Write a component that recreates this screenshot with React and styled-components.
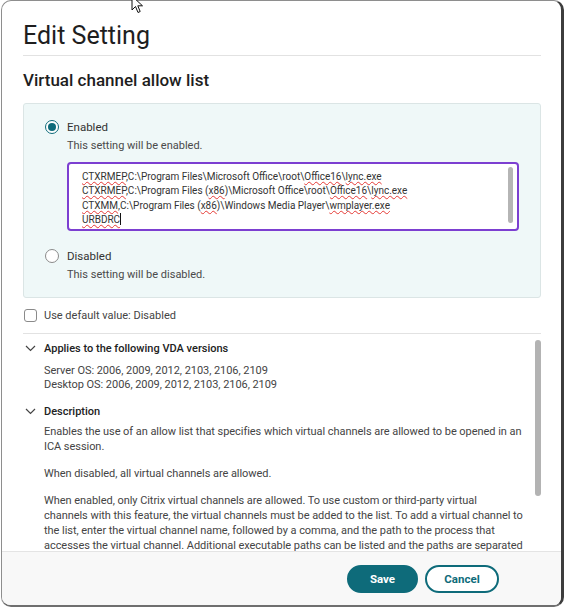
import React from 'react'
import styled, { createGlobalStyle } from 'styled-components'

const GlobalStyle = createGlobalStyle`
  html, body {
    margin: 0;
    padding: 0;
    background: #ffffff;
  }
  body {
    font-family: Roboto, "Liberation Sans", sans-serif;
    color: #333;
  }
`

const Page = styled.div`
  position: relative;
  width: 567px;
  height: 615px;
  box-sizing: border-box;
  padding: 0 3px 8px 1px;
  overflow: hidden;
  display: flex;
`

const Dialog = styled.div`
  flex: 1;
  display: flex;
  flex-direction: column;
  background: #fff;
  border: 1px solid #8e8e8e;
  border-right: 3px solid #3d3d3d;
  border-bottom: 2px solid #6f6f6f;
  border-radius: 10px;
  overflow: hidden;
`

const Header = styled.div`
  padding: 20px 20px 0 21px;
`

const Title = styled.h1`
  margin: 0;
  font-size: 25px;
  line-height: 30px;
  font-weight: 400;
  color: #1e1e1e;
  padding-bottom: 4px;
  border-bottom: 1px solid #e2e2e2;
`

const SettingName = styled.h2`
  margin: 14px 0 13px;
  font-size: 17px;
  line-height: 20px;
  font-weight: 500;
  color: #1e1e1e;
`

const OptionPanel = styled.div`
  background: #eff8f8;
  border: 1px solid #dbe5e5;
  border-radius: 3px;
  padding: 16px 21px 16px 21px;
`

const OptionRow = styled.label`
  display: flex;
  align-items: center;
  gap: 8px;
  height: 14px;
  font-size: 11.5px;
  color: #333;
  margin-top: ${p => (p.$spaced ? '18px' : '0')};
`

const Radio = styled.span`
  width: 14px;
  height: 14px;
  box-sizing: border-box;
  border-radius: 50%;
  background: #fff;
  border: ${p => (p.$checked ? '1.5px solid #0e6b7a' : '1px solid #8a8a8a')};
  display: flex;
  align-items: center;
  justify-content: center;
  &::after {
    content: '';
    width: 8px;
    height: 8px;
    border-radius: 50%;
    background: ${p => (p.$checked ? '#0e6b7a' : 'transparent')};
  }
`

const Hint = styled.div`
  margin: 5px 0 0 22px;
  font-size: 11px;
  line-height: 13px;
  color: #4a4a4a;
`

const ListBox = styled.div`
  position: relative;
  margin: 10px 0 0 22px;
  height: 69px;
  box-sizing: border-box;
  background: #fff;
  border: 2px solid #7c3fd1;
  border-radius: 4px;
  padding: 6px 20px 0 13px;
  font-size: 10px;
  line-height: 14.3px;
  color: #333;
  white-space: pre;
  overflow: hidden;
`

const Typo = styled.span`
  text-decoration: underline wavy #e53935;
  text-decoration-thickness: 1px;
  text-underline-offset: 1px;
  text-decoration-skip-ink: none;
`

const Caret = styled.span`
  display: inline-block;
  width: 1px;
  height: 12px;
  background: #111;
  vertical-align: -2px;
`

const BoxThumb = styled.div`
  position: absolute;
  right: 4px;
  top: 3px;
  width: 5px;
  height: 56px;
  border-radius: 3px;
  background: #b5b5b5;
`

const DefaultRow = styled.label`
  display: flex;
  align-items: center;
  gap: 7px;
  margin-top: 11px;
  padding: 0 0 11px 1px;
  font-size: 11px;
  color: #444;
  border-bottom: 1px solid #e2e2e2;
`

const Checkbox = styled.span`
  width: 13px;
  height: 13px;
  box-sizing: border-box;
  border: 1.5px solid #8a8a8a;
  border-radius: 3px;
  background: #fff;
`

const Details = styled.div`
  position: relative;
  flex: 1;
  margin: 0 20px 0 21px;
  padding: 7px 8px 0 0;
  overflow: hidden;
`

const ScrollThumb = styled.div`
  position: absolute;
  right: 0;
  top: 6px;
  width: 6px;
  height: 156px;
  border-radius: 3px;
  background: #b3b3b3;
`

const SectionHead = styled.div`
  display: flex;
  align-items: center;
  gap: 8px;
  height: 14px;
  padding-left: 2px;
  font-size: 11px;
  font-weight: 500;
  color: #222;
  margin-top: ${p => (p.$spaced ? '13px' : '0')};
`

const SectionBody = styled.div`
  margin: ${p => (p.$tight ? '9px' : '6px')} 0 0 21px;
  font-size: 11px;
  line-height: ${p => (p.$tight ? '13.5px' : '15px')};
  letter-spacing: -0.05px;
  color: #444;
  white-space: nowrap;
  p {
    margin: 0 0 12px;
  }
`

const Footer = styled.div`
  display: flex;
  justify-content: flex-end;
  align-items: center;
  gap: 7px;
  height: 53px;
  padding-right: 62px;
  background: #f8f8f8;
  border-top: 1px solid #e4e4e4;
`

const Button = styled.button`
  height: 28px;
  width: ${p => (p.$primary ? '71px' : '74px')};
  border-radius: 14px;
  box-sizing: border-box;
  font-family: Roboto, "Liberation Sans", sans-serif;
  font-size: 11.5px;
  font-weight: 700;
  cursor: pointer;
  background: ${p => (p.$primary ? '#0e6b7a' : '#fff')};
  color: ${p => (p.$primary ? '#fff' : '#0e6b7a')};
  border: 2px solid #0e6b7a;
`

const Pointer = styled.svg`
  position: absolute;
  left: 131px;
  top: -5px;
`

const Chevron = () => (
  <svg width="11" height="7" viewBox="0 0 11 7">
    <path d="M1 1 L5.5 5.5 L10 1" fill="none" stroke="#444" strokeWidth="1.2" />
  </svg>
)

export default function App() {
  return (
    <>
      <GlobalStyle />
      <Page>
        <Dialog>
          <Header>
            <Title>Edit Setting</Title>
            <SettingName>Virtual channel allow list</SettingName>
            <OptionPanel>
              <OptionRow>
                <Radio $checked />
                Enabled
              </OptionRow>
              <Hint>This setting will be enabled.</Hint>
              <ListBox>
                <Typo>CTXRMEP</Typo>,C:\Program Files\Microsoft Office\root\<Typo>Office16</Typo>\<Typo>lync.exe</Typo>
                {'\n'}
                <Typo>CTXRMEP</Typo>,C:\Program Files (<Typo>x86</Typo>)\Microsoft Office\root\<Typo>Office16</Typo>\<Typo>lync.exe</Typo>
                {'\n'}
                <Typo>CTXMM</Typo>,C:\Program Files (<Typo>x86</Typo>)\Windows Media Player\<Typo>wmplayer.exe</Typo>
                {'\n'}
                <Typo>URBDRC</Typo><Caret />
                <BoxThumb />
              </ListBox>
              <OptionRow $spaced>
                <Radio />
                Disabled
              </OptionRow>
              <Hint>This setting will be disabled.</Hint>
            </OptionPanel>
            <DefaultRow>
              <Checkbox />
              Use default value: Disabled
            </DefaultRow>
          </Header>
          <Details>
            <ScrollThumb />
            <SectionHead>
              <Chevron />
              Applies to the following VDA versions
            </SectionHead>
            <SectionBody $tight>
              Server OS: 2006, 2009, 2012, 2103, 2106, 2109
              <br />
              Desktop OS: 2006, 2009, 2012, 2103, 2106, 2109
            </SectionBody>
            <SectionHead $spaced>
              <Chevron />
              Description
            </SectionHead>
            <SectionBody>
              <p>
                Enables the use of an allow list that specifies which virtual channels are allowed to be opened in an
                <br />
                ICA session.
              </p>
              <p>When disabled, all virtual channels are allowed.</p>
              <p>
                When enabled, only Citrix virtual channels are allowed. To use custom or third-party virtual
                <br />
                channels with this feature, the virtual channels must be added to the list. To add a virtual channel to
                <br />
                the list, enter the virtual channel name, followed by a comma, and the path to the process that
                <br />
                accesses the virtual channel. Additional executable paths can be listed and the paths are separated
              </p>
            </SectionBody>
          </Details>
          <Footer>
            <Button $primary>Save</Button>
            <Button>Cancel</Button>
          </Footer>
        </Dialog>
        <Pointer width="14" height="20" viewBox="0 0 14 20">
          <path d="M1 1 L1 15 L4.5 11.5 L7 17.5 L9.2 16.5 L6.8 10.8 L11.5 10.8 Z" fill="#fff" stroke="#111" strokeWidth="1" />
        </Pointer>
      </Page>
    </>
  )
}
